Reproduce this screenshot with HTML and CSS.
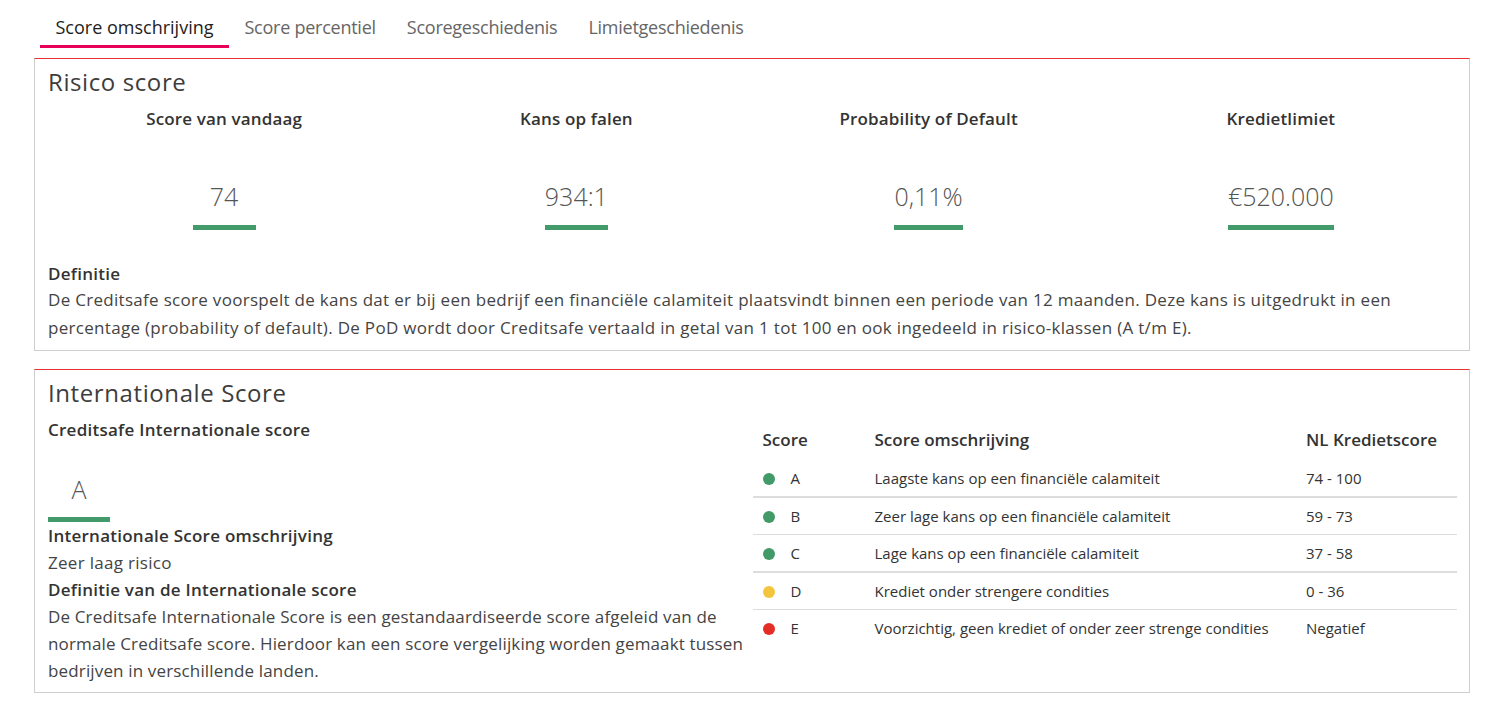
FILE: index.html
```html
<!DOCTYPE html>
<html lang="nl">
<head>
<meta charset="utf-8">
<title>Score omschrijving</title>
<link rel="stylesheet" href="styles.css">
</head>
<body>
<div class="page">
  <nav class="tabs">
    <a class="tab active">Score omschrijving</a>
    <a class="tab">Score percentiel</a>
    <a class="tab">Scoregeschiedenis</a>
    <a class="tab">Limietgeschiedenis</a>
  </nav>

  <section class="panel">
    <h2 class="panel-title">Risico score</h2>
    <div class="stats">
      <div class="stat">
        <div class="stat-label">Score van vandaag</div>
        <div class="stat-value">74</div>
      </div>
      <div class="stat">
        <div class="stat-label">Kans op falen</div>
        <div class="stat-value">934:1</div>
      </div>
      <div class="stat">
        <div class="stat-label">Probability of Default</div>
        <div class="stat-value">0,11%</div>
      </div>
      <div class="stat">
        <div class="stat-label">Kredietlimiet</div>
        <div class="stat-value">€520.000</div>
      </div>
    </div>
    <div class="def-title">Definitie</div>
    <p class="def-text">De Creditsafe score voorspelt de kans dat er bij een bedrijf een financiële calamiteit plaatsvindt binnen een periode van 12 maanden. Deze kans is uitgedrukt in een percentage (probability of default). De PoD wordt door Creditsafe vertaald in getal van 1 tot 100 en ook ingedeeld in risico-klassen (A t/m E).</p>
  </section>

  <section class="panel panel-intl">
    <h2 class="panel-title">Internationale Score</h2>
    <div class="intl">
      <div class="intl-left">
        <div class="intl-label">Creditsafe Internationale score</div>
        <div class="intl-value-wrap"><div class="stat-value intl-value">A</div></div>
        <div class="line-b">Internationale Score omschrijving</div>
        <div class="line">Zeer laag risico</div>
        <div class="line-b">Definitie van de Internationale score</div>
        <p class="line intl-text">De Creditsafe Internationale Score is een gestandaardiseerde score afgeleid van de normale Creditsafe score. Hierdoor kan een score vergelijking worden gemaakt tussen bedrijven in verschillende landen.</p>
      </div>
      <div class="intl-right">
        <table class="score-table">
          <thead>
            <tr><th class="c1">Score</th><th class="c2">Score omschrijving</th><th class="c3">NL Kredietscore</th></tr>
          </thead>
          <tbody>
            <tr class="thick"><td><span class="dot green"></span>A</td><td>Laagste kans op een financiële calamiteit</td><td>74 - 100</td></tr>
            <tr><td><span class="dot green"></span>B</td><td>Zeer lage kans op een financiële calamiteit</td><td>59 - 73</td></tr>
            <tr class="thick"><td><span class="dot green"></span>C</td><td>Lage kans op een financiële calamiteit</td><td>37 - 58</td></tr>
            <tr><td><span class="dot yellow"></span>D</td><td>Krediet onder strengere condities</td><td>0 - 36</td></tr>
            <tr class="last"><td><span class="dot red"></span>E</td><td>Voorzichtig, geen krediet of onder zeer strenge condities</td><td>Negatief</td></tr>
          </tbody>
        </table>
      </div>
    </div>
  </section>
</div>
</body>
</html>
```

FILE: styles.css
```css
* { box-sizing: border-box; }
html, body { margin: 0; padding: 0; background: #fff; }
body {
  font-family: "Open Sans", "Liberation Sans", sans-serif;
  color: #444;
  font-size: 17px;
}
.page {
  padding: 0 18px 0 34px;
}
.tabs {
  display: flex;
  margin-left: 6px;
  margin-bottom: 10px;
}
.tab {
  display: block;
  padding: 14px 15.5px 5px;
  font-size: 18px;
  line-height: 26px;
  letter-spacing: -0.25px;
  color: #666;
  border-bottom: 3px solid transparent;
  cursor: pointer;
}
.tab.active {
  color: #222;
  letter-spacing: 0;
  border-bottom-color: #e8005b;
}
.panel {
  border: 1px solid #cfcfcf;
  border-top: 1px solid #e8312f;
  padding: 0 12px 8px 13px;
}
.panel-intl { margin-top: 18px; }
.panel-title {
  margin: 8px 0 0;
  font-size: 24px;
  letter-spacing: 0.6px;
  line-height: 30px;
  font-weight: 400;
  color: #3d3d3d;
}
.stats {
  display: grid;
  grid-template-columns: repeat(4, 1fr);
  margin-top: 10px;
}
.stat {
  display: flex;
  flex-direction: column;
  align-items: center;
}
.stat-label {
  font-size: 17px;
  line-height: 24px;
  font-weight: 600;
  letter-spacing: 0.15px;
  color: #333;
}
.stat-value {
  margin-top: 49px;
  min-width: 63px;
  padding-bottom: 13px;
  font-size: 25px;
  line-height: 32px;
  font-weight: 300;
  color: #555;
  text-align: center;
  border-bottom: 5px solid #439a6a;
}
.def-title {
  margin-top: 32px;
  font-weight: 600;
  line-height: 24px;
  letter-spacing: 0.25px;
  color: #333;
}
.def-text {
  margin: 0;
  line-height: 28px;
  letter-spacing: 0.3px;
  color: #444;
}
.intl {
  display: grid;
  grid-template-columns: 1fr 1fr;
}
.intl-label {
  margin-top: 10px;
  font-size: 17px;
  font-weight: 600;
  line-height: 24px;
  letter-spacing: 0.25px;
  color: #333;
}
.intl-value-wrap { display: flex; }
.intl-value {
  margin-top: 31px;
  min-width: 62px;
  padding-bottom: 12px;
}
.line-b {
  font-weight: 600;
  line-height: 27px;
  letter-spacing: 0.25px;
  color: #333;
}
.line {
  line-height: 27px;
  letter-spacing: 0.3px;
  color: #444;
  margin: 0;
}
.line.intl-text {
  letter-spacing: 0.15px;
}
.score-table {
  width: 100%;
  margin-top: 12px;
  border-collapse: collapse;
  font-size: 15px;
  color: #333;
}
.score-table th {
  text-align: left;
  font-size: 17px;
  font-weight: 600;
  line-height: 24px;
  padding: 8px 10px;
  color: #333;
}
.score-table th.c1 { width: 112px; }
.score-table th.c3 { width: 161px; }
.score-table td {
  padding: 8px 10px;
  line-height: 20px;
  border-bottom: 1px solid #dddddd;
}
.score-table tr.thick td { border-bottom: 2px solid #dddddd; }
.score-table tr.last td { border-bottom: none; }
.dot {
  display: inline-block;
  width: 12px;
  height: 12px;
  border-radius: 50%;
  margin-right: 16px;
  vertical-align: -1px;
}
.dot.green { background: #429a68; }
.dot.yellow { background: #f2c53d; }
.dot.red { background: #e52d27; }
```
